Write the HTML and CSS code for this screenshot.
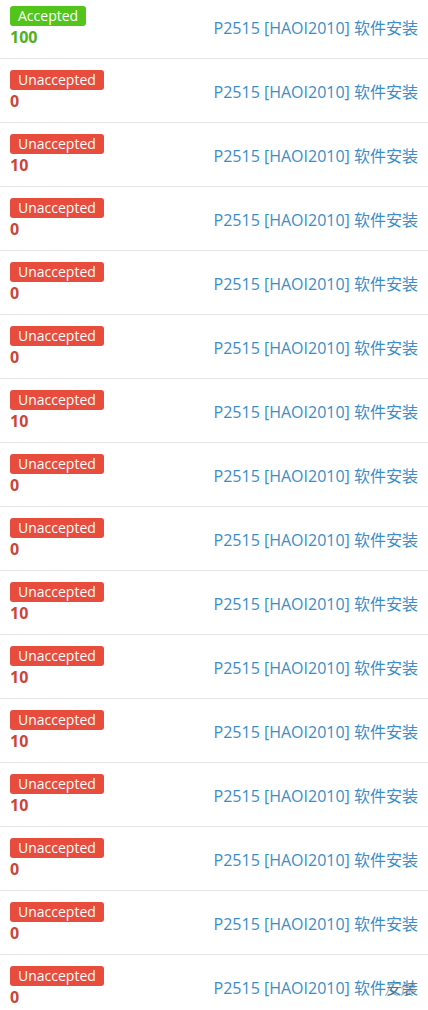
FILE: index.html
```html
<!DOCTYPE html>
<html>
  <head>
    <meta charset="utf-8">
    <meta name="viewport" content="width=device-width, initial-scale=1">
    <title>Records</title>
    <link rel="stylesheet" href="styles.css">
  </head>
  <body>
    <div class="record-list" id="records"></div>
    <span class="float-tip">反馈</span>

    <script>
      const scores = [100, 0, 10, 0, 0, 0, 10, 0, 0, 10, 10, 10, 10, 0, 0, 0];
      const list = document.getElementById('records');
      scores.forEach(score => {
        const ok = score === 100;
        const row = document.createElement('div');
        row.className = 'record-row';
        row.innerHTML = `
          <div class="status">
            <span class="badge ${ok ? 'badge-ac' : 'badge-wa'}">${ok ? 'Accepted' : 'Unaccepted'}</span>
            <span class="score ${ok ? 'score-ac' : 'score-wa'}">${score}</span>
          </div>
          <a class="problem" href="#">P2515 [HAOI2010] 软件安装</a>`;
        list.appendChild(row);
      });
    </script>
  </body>
</html>
```

FILE: styles.css
```css
body { margin: 0; background: #fff; font-family: "Open Sans", "Noto Sans CJK SC", sans-serif; overflow: hidden; }
.record-list { margin-top: -5px; }
.record-row { display: grid; grid-template-columns: 1fr 1fr; align-items: center; padding: 11px 10px 10px; border-bottom: 1px solid #e6e6e6; }
.status { display: flex; flex-direction: column; align-items: flex-start; }
.badge { display: inline-block; height: 20px; line-height: 20px; padding: 0 8px; border-radius: 3px; color: #fff; font-size: 14px; }
.badge-ac { background: #52c41a; }
.badge-wa { background: #e74c3c; }
.score { font-size: 16px; font-weight: bold; line-height: 21px; margin-top: 1px; }
.score-ac { color: #4fb01e; }
.score-wa { color: #c9463a; }
.problem { color: #3b8ec8; text-decoration: none; font-size: 16px; white-space: nowrap; }
.float-tip { position: absolute; left: 384px; top: 978px; font-size: 15px; color: rgba(90, 90, 90, 0.55); font-style: italic; }
```
